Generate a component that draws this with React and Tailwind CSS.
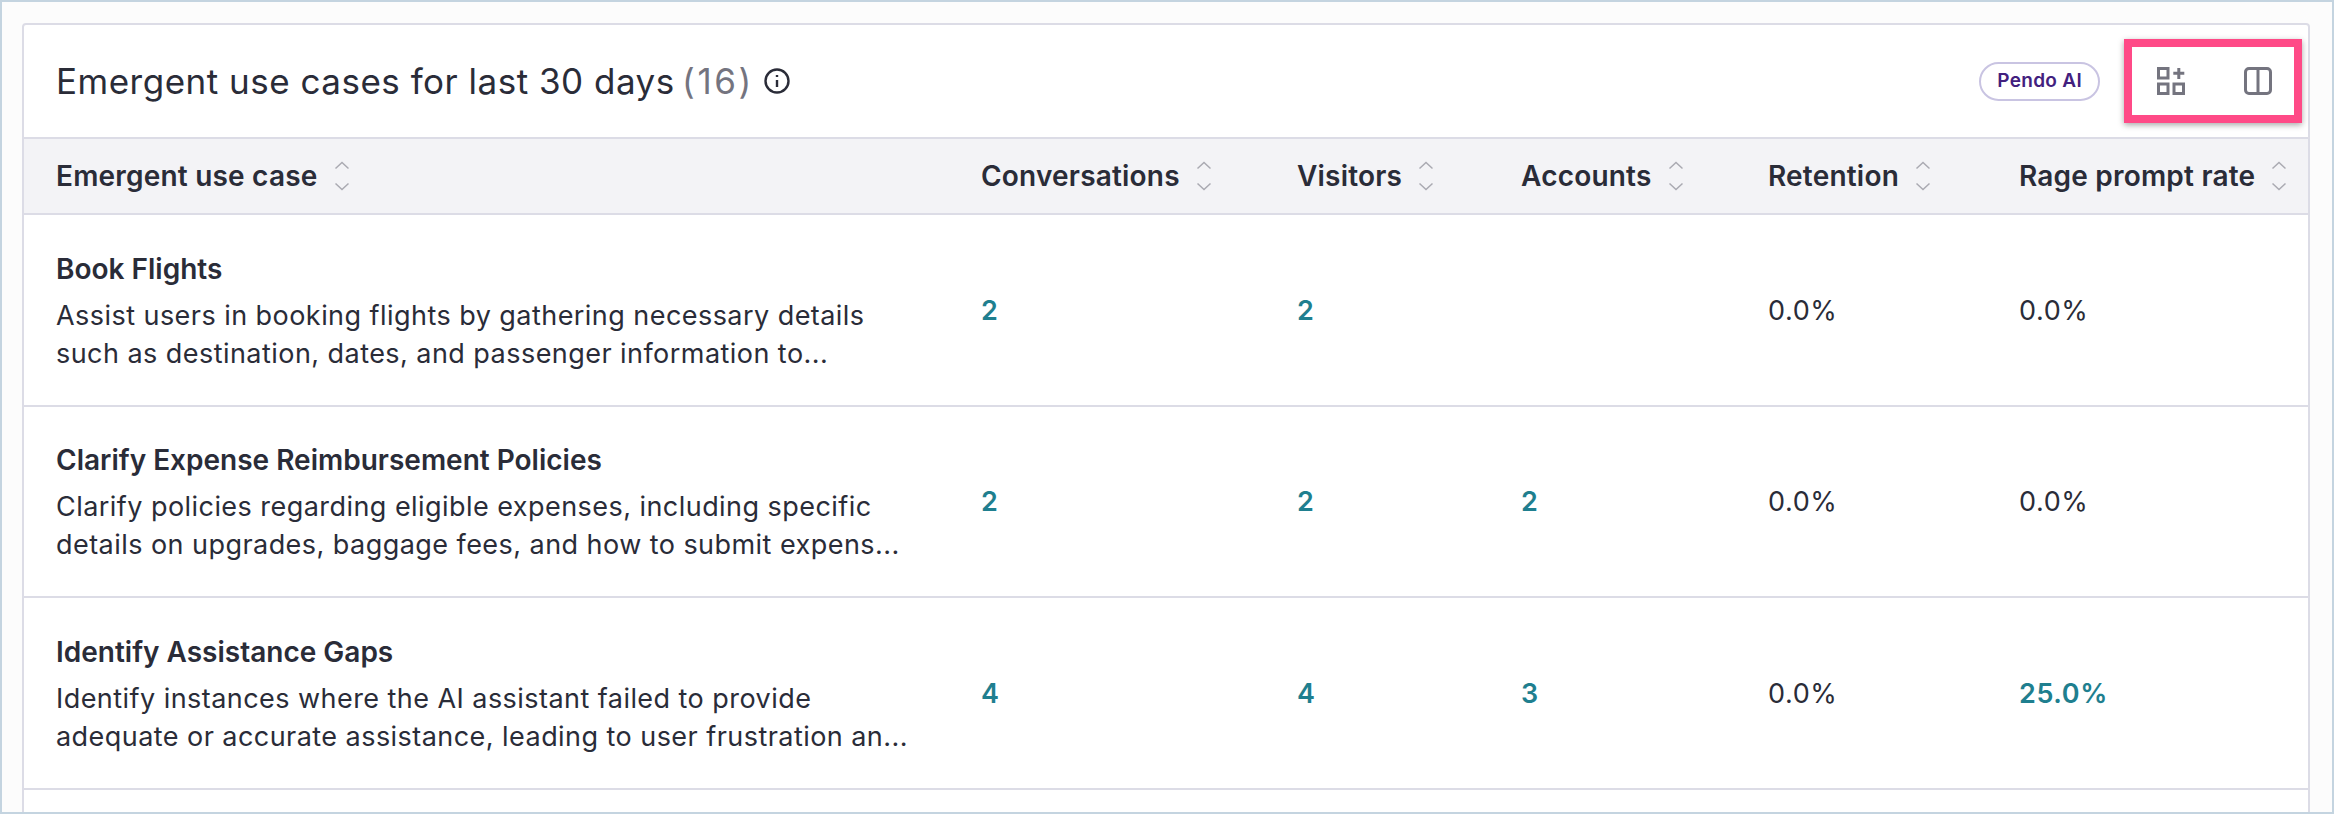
import React from 'react';

const columns = [
  { label: 'Emergent use case', className: 'w-[957px] pl-[32px]' },
  { label: 'Conversations', className: 'w-[316px]' },
  { label: 'Visitors', className: 'w-[224px]' },
  { label: 'Accounts', className: 'w-[247px]' },
  { label: 'Retention', className: 'w-[251px]' },
  { label: 'Rage prompt rate', className: 'flex-1' },
];

const rows = [
  {
    name: 'Book Flights',
    lines: ['Assist users in booking flights by gathering necessary details', 'such as destination, dates, and passenger information to...'],
    conversations: '2',
    visitors: '2',
    accounts: '',
    retention: '0.0%',
    rage: '0.0%',
  },
  {
    name: 'Clarify Expense Reimbursement Policies',
    lines: ['Clarify policies regarding eligible expenses, including specific', 'details on upgrades, baggage fees, and how to submit expens...'],
    conversations: '2',
    visitors: '2',
    accounts: '2',
    retention: '0.0%',
    rage: '0.0%',
  },
  {
    name: 'Identify Assistance Gaps',
    lines: ['Identify instances where the AI assistant failed to provide', 'adequate or accurate assistance, leading to user frustration an...'],
    conversations: '4',
    visitors: '4',
    accounts: '3',
    retention: '0.0%',
    rage: '25.0%',
    rageLink: true,
  },
];

function SortIcon() {
  return (
    <svg width="16" height="32" viewBox="0 0 16 32" fill="none" stroke="#aaaab2" strokeWidth="1.5" className="ml-[16px] shrink-0">
      <path d="M1.5 8.5 8 2.5l6.5 6" />
      <path d="M1.5 23.5 8 29.5l6.5-6" />
    </svg>
  );
}

function InfoIcon() {
  return (
    <svg width="28" height="28" viewBox="0 0 28 28" fill="none" stroke="#2a2c38" strokeWidth="2.4" className="ml-[9px]">
      <circle cx="14" cy="14" r="11.5" />
      <path d="M14 13v7" />
      <path d="M14 8v2" />
    </svg>
  );
}

function AddWidgetIcon() {
  return (
    <svg width="28" height="28" viewBox="0 0 28 28" fill="none" stroke="#74747f" strokeWidth="3">
      <rect x="1.5" y="1.5" width="9.5" height="9.5" />
      <rect x="1.5" y="17" width="9.5" height="9.5" />
      <rect x="17" y="17" width="9.5" height="9.5" />
      <path d="M21.8 1v11M16.3 6.3h11" />
    </svg>
  );
}

function SplitIcon() {
  return (
    <svg width="28" height="28" viewBox="0 0 28 28" fill="none" stroke="#74747f" strokeWidth="3">
      <rect x="1.5" y="1.5" width="25" height="25" rx="3.5" />
      <path d="M14 1.5v25" />
    </svg>
  );
}

function Cell({ className, link, children }) {
  return (
    <div className={`${className} ${link ? 'font-semibold text-[#1f7f8f]' : 'text-[#2a2c38]'} pt-[2px] text-[27px] tracking-[0.6px]`}>
      {children}
    </div>
  );
}

export default function App() {
  return (
    <div className="h-[814px] overflow-hidden border-2 border-[#c4d4e0] bg-[#fcfcfc] pt-[21px] pl-[20px] pr-[22px] font-['Inter',sans-serif]">
      <div className="relative h-[900px] rounded-t-[4px] border-2 border-[#dcdce6] bg-white">
        <div className="flex h-[112px] items-center pl-[32px] pr-[36px]">
          <h1 className="text-[35px] tracking-[0.5px] text-[#2a2c38]">
            Emergent use cases for last 30 days <span className="-ml-[3px] tracking-[2.6px] text-[#74747f]">(16)</span>
          </h1>
          <InfoIcon />
          <div className="ml-auto flex h-[39px] items-center rounded-full border-2 border-[#c9c4e2] px-[16px] text-[19px] font-semibold tracking-[0.3px] text-[#42207e]">
            Pendo AI
          </div>
          <div className="ml-[56px] flex w-[116px] items-center justify-between pl-[1px]">
            <AddWidgetIcon />
            <SplitIcon />
          </div>
        </div>

        {/* pink callout over the toolbar icons */}
        <div className="absolute top-[14px] right-[6px] h-[84px] w-[178px] border-[8px] border-[#ff4a87] shadow-[0_2px_6px_rgba(0,0,0,0.35)]" />

        <div className="flex h-[78px] items-center border-y-2 border-[#dcdce6] bg-[#f3f3f6]">
          {columns.map((col) => (
            <div key={col.label} className={`${col.className} flex items-center text-[28px] font-semibold tracking-[0.2px] text-[#2a2c38]`}>
              {col.label}
              <SortIcon />
            </div>
          ))}
        </div>

        {rows.map((row) => (
          <div key={row.name} className="flex h-[191.67px] items-center border-b-2 border-[#dcdce6]">
            <div className="w-[957px] pt-[3px] pl-[32px] text-[#2a2c38]">
              <div className="text-[28px] leading-[38px] font-semibold">{row.name}</div>
              <div className="mt-[9px] text-[27px] leading-[38px] tracking-[0.45px]">
                {row.lines.map((line) => (
                  <div key={line} className="whitespace-nowrap">{line}</div>
                ))}
              </div>
            </div>
            <Cell className="w-[316px]" link>{row.conversations}</Cell>
            <Cell className="w-[224px]" link>{row.visitors}</Cell>
            <Cell className="w-[247px]" link>{row.accounts}</Cell>
            <Cell className="w-[251px]">{row.retention}</Cell>
            <Cell className="flex-1" link={row.rageLink}>{row.rage}</Cell>
          </div>
        ))}
      </div>
    </div>
  );
}
